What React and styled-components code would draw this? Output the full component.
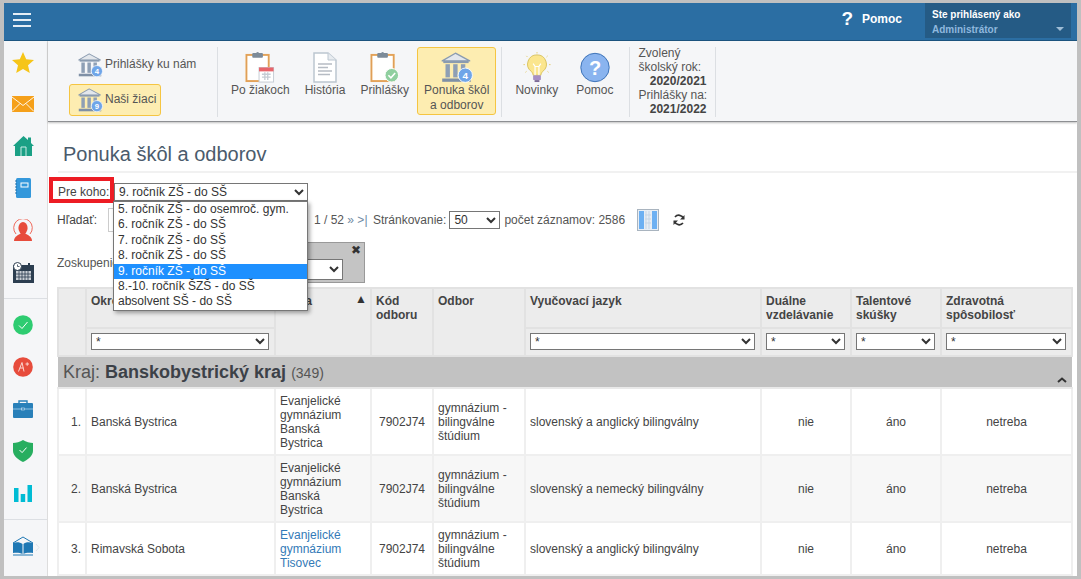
import React from "react"
import styled, { createGlobalStyle } from "styled-components"

const Global = createGlobalStyle`
  html, body { margin: 0; padding: 0; height: 100%; overflow: hidden; }
  body { font-family: "Liberation Sans", Arial, sans-serif; font-size: 12px; color: #444; background: #c0c0c0; }
`

const Bank = ({ n, size = 26 }) => (
  <svg width={size} height={size * 0.93} viewBox="0 0 30 28">
    <path d="M2 8 L14 1 L27 8 Z" fill="#e3e7ec" stroke="#8a9bb0" strokeWidth="1.2" strokeLinejoin="round" />
    <rect x="3" y="8" width="23" height="2" fill="#8a9bb0" />
    <rect x="5" y="11" width="4" height="12" fill="#8e9fb5" />
    <rect x="12" y="11" width="4" height="12" fill="#8e9fb5" />
    <rect x="19" y="11" width="4" height="12" fill="#8e9fb5" />
    <rect x="2" y="24" width="26" height="3" fill="#7f90a6" />
    <circle cx="23" cy="21" r="6.5" fill="#6fa5e8" stroke="#fff" strokeWidth="0.8" />
    <text x="23" y="24.5" fontSize="9" fontWeight="700" fill="#fff" textAnchor="middle" fontFamily="Liberation Sans">{n}</text>
  </svg>
)

const Clipboard = ({ children }) => (
  <svg width="30" height="32" viewBox="0 0 30 32">
    <rect x="1" y="3" width="23" height="27" fill="#fff" stroke="#e8a95b" strokeWidth="2" />
    <rect x="1" y="3" width="23" height="27" fill="none" stroke="#d7955a" strokeWidth="0.5" />
    <rect x="7" y="1" width="11" height="5" rx="1" fill="#7d8b99" />
    <circle cx="12.5" cy="1.6" r="1.6" fill="#7d8b99" />
    {children}
  </svg>
)

const ClipCalendar = () => (
  <Clipboard>
    <rect x="14" y="16" width="15" height="15" fill="#fff" stroke="#c5ccd4" />
    <rect x="14" y="16" width="15" height="4" fill="#e8646a" />
    <path d="M17 23h9M17 26h9M20 21v8M23 21v8" stroke="#c5ccd4" strokeWidth="1.4" />
  </Clipboard>
)

const ClipCheck = () => (
  <Clipboard>
    <circle cx="22" cy="24" r="7" fill="#8fcf9f" stroke="#fff" />
    <path d="M18.5 24l2.6 2.6 4.4-5" fill="none" stroke="#fff" strokeWidth="1.6" />
  </Clipboard>
)

const Doc = () => (
  <svg width="24" height="31" viewBox="0 0 24 31">
    <path d="M1 1 H15 L23 8 V30 H1 Z" fill="#fff" stroke="#bcc6d0" strokeWidth="1.5" />
    <path d="M15 1 V8 H23" fill="#e8ecf0" stroke="#bcc6d0" />
    <path d="M5 12h14M5 15.5h10M5 19h14M5 22.5h12" stroke="#b6bcc4" strokeWidth="1.4" />
  </svg>
)

const Bulb = () => (
  <svg width="28" height="32" viewBox="0 0 28 32">
    <path d="M14 3 a9.5 9.5 0 0 0 -6 17 c1.3 1.2 1.8 2.5 2 4 h8 c.2-1.5 .7-2.8 2-4 a9.5 9.5 0 0 0 -6-17 Z" fill="#fbe68e" stroke="#d8c25f" />
    <path d="M12 24 V15 l-2-3 M16 24 V15 l2-3 M12 15 h4" fill="none" stroke="#fff" strokeWidth="1.2" />
    <rect x="10" y="24" width="8" height="5" rx="1" fill="#a68fc4" />
    <rect x="11.5" y="29" width="5" height="2" fill="#7c6a96" />
    <path d="M14 0v1.5M3 4l1.2 1.2M25 4l-1.2 1.2M0 13h1.6M26.4 13H28M2 21l1.2-1M26 21l-1.2-1" stroke="#e5cf7a" />
  </svg>
)

const HelpBall = () => (
  <svg width="30" height="30" viewBox="0 0 30 30">
    <circle cx="15" cy="15" r="14.2" fill="#8ab4ef" stroke="#3f74b8" />
    <text x="15" y="22" fontSize="20" fontWeight="700" fill="#fff" textAnchor="middle" fontFamily="Liberation Sans">?</text>
  </svg>
)

const Star = () => (
  <svg width="22" height="21" viewBox="0 0 22 21"><path d="M11 0 L14.2 7.3 L22 8 L16 13.2 L17.8 21 L11 16.9 L4.2 21 L6 13.2 L0 8 L7.8 7.3 Z" fill="#f6c518" /></svg>
)
const Mail = () => (
  <svg width="22" height="16" viewBox="0 0 22 16"><rect width="22" height="16" fill="#f5a01a" /><path d="M0 1 L11 9.5 L22 1 M0 15.5 L8 7.5 M22 15.5 L14 7.5" fill="none" stroke="#fff" strokeWidth="0.9" /></svg>
)
const Home = () => (
  <svg width="21" height="21" viewBox="0 0 21 21"><path d="M0 10 L10.5 0 L15 4 V1.5 H18 V7 L21 10 H19 V20 H2 V10 Z" fill="#1aa085" /><path d="M8 20 V11 H13 V20" fill="none" stroke="#c9ece5" /></svg>
)
const Notebook = () => (
  <svg width="16" height="20" viewBox="0 0 16 20"><rect x="1" width="15" height="20" rx="1.5" fill="#3498db" /><rect x="6" y="5" width="7" height="4" fill="none" stroke="#fff" /><path d="M0 3h2M0 6h2M0 9h2M0 12h2M0 15h2" stroke="#1f6fa8" /></svg>
)
const User = () => (
  <svg width="20" height="23" viewBox="0 0 20 23"><path d="M3 15 A9.3 9.3 0 1 1 17 15" fill="none" stroke="#ef6a5c" /><ellipse cx="10" cy="9" rx="4.6" ry="6" fill="#e74c3c" /><path d="M1 22 C1 17 6 16 8 14 H12 C14 16 19 17 19 22 Z" fill="#e74c3c" /></svg>
)
const Calendar = () => (
  <svg width="21" height="21" viewBox="0 0 21 21"><rect y="3" width="21" height="18" fill="#2c3e50" /><rect x="3" y="9" width="15" height="9" fill="#c8ced4" /><path d="M3 12h15M3 15h15M6 9v9M9 9v9M12 9v9M15 9v9" stroke="#2c3e50" strokeWidth="0.8" /><circle cx="4.5" cy="4.5" r="4" fill="#fff" stroke="#2c3e50" /><path d="M4.5 2.5v2h2" fill="none" stroke="#2c3e50" strokeWidth="0.8" /><rect x="15" y="1" width="2" height="4" fill="#2c3e50" /></svg>
)
const Check = () => (
  <svg width="20" height="20" viewBox="0 0 20 20"><circle cx="10" cy="10" r="9.8" fill="#2ecc71" /><path d="M6 10.5l3 3 5.5-6.5" fill="none" stroke="#fff" /></svg>
)
const APlus = () => (
  <svg width="20" height="20" viewBox="0 0 20 20"><circle cx="10" cy="10" r="9.8" fill="#e74c3c" /><path d="M5.5 14.5 L9 5.5 L11 14.5 M6.8 11h3.6 M12.5 7h3.5 M14.2 5.3v3.5" fill="none" stroke="#fbd5d0" /></svg>
)
const Briefcase = () => (
  <svg width="20" height="18" viewBox="0 0 20 18"><rect y="3" width="20" height="15" rx="1" fill="#2980b9" /><path d="M6 3V1h8v2" fill="none" stroke="#2980b9" strokeWidth="1.4" /><path d="M0 9h20" stroke="#8cc0e2" /><rect x="8.5" y="8" width="3" height="2" fill="#2980b9" stroke="#cfe4f3" strokeWidth="0.6" /></svg>
)
const Shield = () => (
  <svg width="20" height="22" viewBox="0 0 20 22"><path d="M10 0 C13 2 17 3 20 3 V11 C20 16 14 20 10 22 C6 20 0 16 0 11 V3 C3 3 7 2 10 0 Z" fill="#27ae60" /><path d="M6.5 10l2.6 2.6 4.4-5" fill="none" stroke="#fff" /></svg>
)
const Bars = () => (
  <svg width="18" height="17" viewBox="0 0 18 17"><path d="M0 3h4.5v14H0zM6.7 9h4.5v8H6.7zM13.5 0H18v17h-4.5z" fill="#00bcd4" /></svg>
)
const Book = () => (
  <svg width="28" height="21" viewBox="0 0 28 21">
    <path d="M1 7 L11 1 L21 7" fill="none" stroke="#1f78b4" />
    <path d="M1 7 C4 6 8 6 10.5 8 V18 C8 16.5 4 16.5 1 17 Z M21 7 C18 6 13 6 11.5 8 V18 C13 16.5 18 16.5 21 17 Z" fill="#1f78b4" />
    <path d="M1 19 H21" stroke="#1f78b4" />
    <path d="M24 8l3 3.5-3 3.5" fill="none" stroke="#dfe3e8" />
  </svg>
)

const Layout = styled.div`
  height: 573px;
  margin: 3px 4px 0;
  display: flex;
  flex-direction: column;
  overflow: hidden;
  background: #fff;
`

const TopBar = styled.header`
  height: 38px;
  flex: none;
  box-sizing: border-box;
  display: flex;
  align-items: flex-start;
  background: #2b6ea3;
  border-bottom: 1px solid #1c5580;
  padding-right: 6px;
  color: #fff;
`

const Burger = styled.div`
  width: 18px;
  margin: 10px 0 0 9px;
  display: flex;
  flex-direction: column;
  gap: 4px;
  span { height: 2px; background: #e6eef5; }
`

const HelpLink = styled.div`
  margin-left: auto;
  display: flex;
  align-items: center;
  height: 32px;
  font-weight: 700;
  gap: 9px;
  margin-right: 23px;
  b { font-size: 19px; }
`

const UserBox = styled.div`
  position: relative;
  width: 146px;
  height: 35px;
  box-sizing: border-box;
  padding: 5px 7px;
  background: #255b85;
  font-size: 10px;
  line-height: 14px;
  font-weight: 700;
  div + div { color: #8fb8de; margin-top: 1px; }
  &::after {
    content: "";
    position: absolute;
    right: 7px;
    bottom: 7px;
    border: 4px solid transparent;
    border-top: 4px solid #9fbdd6;
    border-bottom: 0;
  }
`

const Body = styled.div`
  flex: 1;
  display: flex;
  min-height: 0;
`

const SideNav = styled.nav`
  width: 43px;
  flex: none;
  background: #f5f6f8;
  border-right: 1px solid #ddd;
`

const NavItem = styled.div`
  height: 42px;
  display: flex;
  align-items: center;
  justify-content: center;
  padding-right: 5px;
  margin-left: ${(p) => (p.$shift ? "6px" : "0")};
`

const NavSep = styled.div`
  height: 1px;
  background: #dcdfe3;
  margin: 5px 0 5px;
`

const Main = styled.div`
  flex: 1;
  min-width: 0;
  display: flex;
  flex-direction: column;
`

const Toolbar = styled.div`
  height: 81px;
  flex: none;
  display: flex;
  box-sizing: border-box;
  padding: 6px 0 0 21px;
  background: #f5f6f8;
  border-bottom: 1px solid #8d8f92;
  box-shadow: 0 1px 2px rgba(0, 0, 0, 0.25);
  position: relative;
`

const SmallGroup = styled.div`
  width: 148px;
  padding-top: 2px;
  display: flex;
  flex-direction: column;
  align-items: flex-start;
  gap: 3px;
`

const SmallBtn = styled.div`
  height: 32px;
  box-sizing: border-box;
  display: flex;
  align-items: center;
  gap: 2px;
  padding: 0 4px 0 7px;
  border: 1px solid ${(p) => (p.$active ? "#f5c542" : "transparent")};
  border-radius: 3px;
  background: ${(p) => (p.$active ? "#fdedb1" : "transparent")};
  color: #555;
  white-space: nowrap;
`

const SmallLabel = styled.span`
  margin-bottom: 3px;
`

const ToolSep = styled.div`
  width: 1px;
  height: 70px;
  background: #dcdfe3;
  flex: none;
  margin: 0 ${(p) => p.$right ?? 6}px 0 ${(p) => p.$left ?? 0}px;
`

const BigBtn = styled.div`
  height: 68px;
  box-sizing: border-box;
  padding: 4px 6px 0;
  margin-right: ${(p) => p.$gap ?? 1}px;
  display: flex;
  flex-direction: column;
  align-items: center;
  justify-content: flex-start;
  text-align: center;
  line-height: 15px;
  color: #555;
  border: 1px solid ${(p) => (p.$active ? "#f5c542" : "transparent")};
  border-radius: 3px;
  background: ${(p) => (p.$active ? "#fdedb1" : "transparent")};
  white-space: nowrap;
  & > svg { height: 31px; flex: none; }
`

const YearInfo = styled.div`
  width: 68px;
  margin: -1px 8px 0 9px;
  line-height: 14px;
  color: #555;
  white-space: nowrap;
  b { display: block; text-align: right; color: #444; }
`

const Content = styled.section`
  flex: 1;
  min-height: 0;
  padding: 0 6px 0 9px;
  position: relative;
`

const Title = styled.h1`
  height: 47px;
  margin: 4px -6px 0 1px;
  padding: 15px 0 0 5px;
  box-sizing: border-box;
  font-size: 20px;
  line-height: 26px;
  font-weight: 400;
  color: #4a5b6c;
  border-bottom: 2px solid #f1f1f1;
`

const ForRow = styled.div`
  position: relative;
  margin-top: 10px;
  height: 18px;
  display: flex;
  align-items: center;
`

const ForLabel = styled.label`
  position: relative;
  width: 57px;
  padding-left: 1px;
  box-sizing: border-box;
  &::after {
    content: "";
    position: absolute;
    left: -8px;
    top: -8px;
    width: 65px;
    height: 26px;
    box-sizing: border-box;
    border: 4px solid #ed1c24;
    pointer-events: none;
  }
`

const Picker = styled.select`
  font: 12px "Liberation Sans", Arial, sans-serif;
  color: #333;
  height: ${(p) => p.$h ?? 18}px;
  width: ${(p) => p.$w ?? "100%"};
  box-sizing: border-box;
  background: #fff;
  flex: none;
`

const OptionList = styled.ul`
  position: absolute;
  left: 56px;
  top: 18px;
  z-index: 5;
  width: 195px;
  margin: 0;
  padding: 0;
  box-sizing: border-box;
  list-style: none;
  background: #fff;
  border: 1px solid #777;
  box-shadow: 2px 2px 4px rgba(0, 0, 0, 0.35);
  color: #333;
`

const OptionItem = styled.li`
  height: 15.4px;
  line-height: 15.4px;
  padding-left: 4px;
  background: ${(p) => (p.$selected ? "#1e90ff" : "transparent")};
  color: ${(p) => (p.$selected ? "#fff" : "#333")};
`

const SearchRow = styled.div`
  display: flex;
  align-items: center;
  height: 24px;
  margin-top: 7px;
  white-space: nowrap;
`

const SearchLabel = styled.span`
  width: 51px;
`

const SearchInput = styled.input`
  width: 200px;
  height: 24px;
  box-sizing: border-box;
  border: 1px solid #ccc;
  margin-right: 6px;
`

const Pager = styled.span`
  width: 54px;
  color: #555;
  margin-right: 5px;
  i { font-style: normal; color: #6f8aa3; }
`

const Muted = styled.span`
  color: #555;
  margin: 0 ${(p) => p.$right ?? 0}px 0 ${(p) => p.$left ?? 0}px;
`

const ToolIcon = styled.span`
  display: inline-flex;
  margin-left: ${(p) => p.$left}px;
`

const GroupRow = styled.div`
  display: flex;
  align-items: center;
  height: 41px;
  margin-top: 10px;
`

const GroupLabel = styled.span`
  width: 118px;
  color: #555;
`

const GroupBox = styled.div`
  position: relative;
  width: 190px;
  height: 41px;
  box-sizing: border-box;
  padding: 16px 21px 0 0;
  background: #c4c4c4;
  border: 1px solid #999;
  display: flex;
  justify-content: flex-end;
  &::before {
    content: "✖";
    position: absolute;
    right: 3px;
    top: 0;
    font-size: 12px;
    color: #333;
  }
`

const Grid = styled.table`
  margin-top: 4px;
  width: 1014px;
  table-layout: fixed;
  border-collapse: collapse;
  line-height: 14px;
`

const Col = styled.col`
  width: ${(p) => p.$w}px;
`

const Th = styled.th`
  background: #ececec;
  border: 2px solid #e2e2e2;
  padding: 5px 4px;
  text-align: left;
  vertical-align: top;
  font-weight: 700;
  color: #444;
  position: relative;
  height: 27px;
`

const FilterCell = styled.td`
  background: #ececec;
  border: 2px solid #e2e2e2;
  padding: 4px 5px 5px 4px;
  height: 17px;
  vertical-align: top;
`

const SortMark = styled.span`
  position: absolute;
  right: 3px;
  top: 3px;
  font-size: 12px;
  color: #333;
`

const RegionCell = styled.td`
  position: relative;
  background: #c2c2c2;
  border-bottom: 2px solid #e9e9e9;
  height: 30px;
  padding: 0 5px;
  font-size: 18px;
  color: #555;
  b { color: #3c4148; }
  small { font-size: 14px; }
  svg { position: absolute; right: 5px; bottom: 4px; }
`

const Tr = styled.tr`
  background: ${(p) => (p.$odd ? "#f7f7f7" : "#fff")};
`

const Td = styled.td`
  border: 2px solid #efefef;
  padding: 0 4px;
  height: ${(p) => p.$h ?? "auto"};
  color: #444;
  text-align: ${(p) => p.$align ?? "left"};
  vertical-align: middle;
  overflow: hidden;
`

const SchoolLink = styled.span`
  color: #337ab7;
`

const cols = [28, 189, 96, 62, 92, 236, 90, 90, 131]

const grades = [
  "5. ročník ZŠ - do osemroč. gym.",
  "6. ročník ZŠ - do SŠ",
  "7. ročník ZŠ - do SŠ",
  "8. ročník ZŠ - do SŠ",
  "9. ročník ZŠ - do SŠ",
  "8.-10. ročník ŠZŠ - do SŠ",
  "absolvent SŠ - do SŠ",
]

const rows = [
  { n: "1.", okres: "Banská Bystrica", skola: ["Evanjelické", "gymnázium", "Banská", "Bystrica"], jazyk: "slovenský a anglický bilingválny", h: "65px" },
  { n: "2.", okres: "Banská Bystrica", skola: ["Evanjelické", "gymnázium", "Banská", "Bystrica"], jazyk: "slovenský a nemecký bilingválny", h: "65px" },
  { n: "3.", okres: "Rimavská Sobota", skola: ["Evanjelické", "gymnázium", "Tisovec"], jazyk: "slovenský a anglický bilingválny", link: true, h: "51px" },
]

const Star1 = () => <Picker $h={17}><option>*</option></Picker>

const App = () => (
  <>
    <Global />
    <Layout>
      <TopBar>
        <Burger><span /><span /><span /></Burger>
        <HelpLink><b>?</b>Pomoc</HelpLink>
        <UserBox>
          <div>Ste prihlásený ako</div>
          <div>Administrátor</div>
        </UserBox>
      </TopBar>
      <Body>
        <SideNav>
          <NavItem><Star /></NavItem>
          <NavItem><Mail /></NavItem>
          <NavItem><Home /></NavItem>
          <NavItem><Notebook /></NavItem>
          <NavItem><User /></NavItem>
          <NavItem><Calendar /></NavItem>
          <NavSep />
          <NavItem><Check /></NavItem>
          <NavItem><APlus /></NavItem>
          <NavItem><Briefcase /></NavItem>
          <NavItem><Shield /></NavItem>
          <NavItem><Bars /></NavItem>
          <NavSep />
          <NavItem $shift><Book /></NavItem>
        </SideNav>
        <Main>
          <Toolbar>
            <SmallGroup>
              <SmallBtn><Bank n="4" /><SmallLabel>Prihlášky ku nám</SmallLabel></SmallBtn>
              <SmallBtn $active><Bank n="9" /><SmallLabel>Naši žiaci</SmallLabel></SmallBtn>
            </SmallGroup>
            <ToolSep />
            <BigBtn><ClipCalendar />Po žiakoch</BigBtn>
            <BigBtn><Doc />História</BigBtn>
            <BigBtn><ClipCheck />Prihlášky</BigBtn>
            <BigBtn $active $gap={5}><Bank n="4" size={33} />Ponuka škôl<br />a odborov</BigBtn>
            <ToolSep />
            <BigBtn $gap={4}><Bulb />Novinky</BigBtn>
            <BigBtn $gap={8}><HelpBall />Pomoc</BigBtn>
            <ToolSep $right={0} />
            <YearInfo>
              Zvolený<br />školský rok:
              <b>2020/2021</b>
              Prihlášky na:
              <b>2021/2022</b>
            </YearInfo>
            <ToolSep $right={0} />
          </Toolbar>
          <Content>
            <Title>Ponuka škôl a odborov</Title>
            <ForRow>
              <ForLabel>Pre koho:</ForLabel>
              <Picker $w="194px" defaultValue={grades[4]}>
                {grades.map((g) => <option key={g}>{g}</option>)}
              </Picker>
              <OptionList>
                {grades.map((g, i) => <OptionItem key={g} $selected={i === 4}>{g}</OptionItem>)}
              </OptionList>
            </ForRow>
            <SearchRow>
              <SearchLabel>Hľadať:</SearchLabel>
              <SearchInput />
              <Pager>1 / 52 <i>» &gt;|</i></Pager>
              <Muted $right={3}>Stránkovanie:</Muted>
              <Picker $w="51px"><option>50</option></Picker>
              <Muted $left={4}>počet záznamov: 2586</Muted>
              <ToolIcon $left={12}>
                <svg width="22" height="22" viewBox="0 0 22 22">
                  <rect x="0.5" y="0.5" width="21" height="21" fill="#e8eef5" stroke="#a9b4bf" />
                  <rect x="2" y="2" width="5" height="18" fill="#6db0f2" />
                  <rect x="15" y="2" width="5" height="18" fill="#6db0f2" />
                  <path d="M9 2v18M12 2v18M8 6h6M8 10h6M8 14h6" stroke="#c7d5e4" />
                </svg>
              </ToolIcon>
              <ToolIcon $left={14}>
                <svg width="12" height="12" viewBox="0 0 12 12">
                  <path d="M10.5 4.5 A5 5 0 0 0 2 3 M1.5 7.5 A5 5 0 0 0 10 9" fill="none" stroke="#333" strokeWidth="1.7" />
                  <path d="M11.5 1 V5.5 H7 Z M0.5 11 V6.5 H5 Z" fill="#333" />
                </svg>
              </ToolIcon>
            </SearchRow>
            <GroupRow>
              <GroupLabel>Zoskupenie:</GroupLabel>
              <GroupBox><Picker $w="120px" $h={21}><option /></Picker></GroupBox>
            </GroupRow>
            <Grid>
              <colgroup>{cols.map((w, i) => <Col key={i} $w={w} />)}</colgroup>
              <thead>
                <tr>
                  <Th rowSpan={2} />
                  <Th>Okres</Th>
                  <Th rowSpan={2}>Škola<SortMark>▲</SortMark></Th>
                  <Th rowSpan={2}>Kód odboru</Th>
                  <Th rowSpan={2}>Odbor</Th>
                  <Th>Vyučovací jazyk</Th>
                  <Th>Duálne vzdelávanie</Th>
                  <Th>Talentové skúšky</Th>
                  <Th>Zdravotná spôsobilosť</Th>
                </tr>
                <tr>
                  <FilterCell><Star1 /></FilterCell>
                  <FilterCell><Star1 /></FilterCell>
                  <FilterCell><Star1 /></FilterCell>
                  <FilterCell><Star1 /></FilterCell>
                  <FilterCell><Star1 /></FilterCell>
                </tr>
              </thead>
              <tbody>
                <tr>
                  <RegionCell colSpan={9}>
                    Kraj: <b>Banskobystrický kraj</b> <small>(349)</small>
                    <svg width="10" height="6" viewBox="0 0 10 6"><path d="M1 5l4-3.5L9 5" fill="none" stroke="#333" strokeWidth="2" /></svg>
                  </RegionCell>
                </tr>
                {rows.map((r, i) => (
                  <Tr key={i} $odd={i === 1}>
                    <Td $align="right" $h={r.h}>{r.n}</Td>
                    <Td>{r.okres}</Td>
                    <Td>
                      {r.link
                        ? <SchoolLink>{r.skola.map((s) => <div key={s}>{s}</div>)}</SchoolLink>
                        : r.skola.map((s) => <div key={s}>{s}</div>)}
                    </Td>
                    <Td $align="center">7902J74</Td>
                    <Td>gymnázium - bilingválne štúdium</Td>
                    <Td>{r.jazyk}</Td>
                    <Td $align="center">nie</Td>
                    <Td $align="center">áno</Td>
                    <Td $align="center">netreba</Td>
                  </Tr>
                ))}
              </tbody>
            </Grid>
          </Content>
        </Main>
      </Body>
    </Layout>
  </>
)

export default App
